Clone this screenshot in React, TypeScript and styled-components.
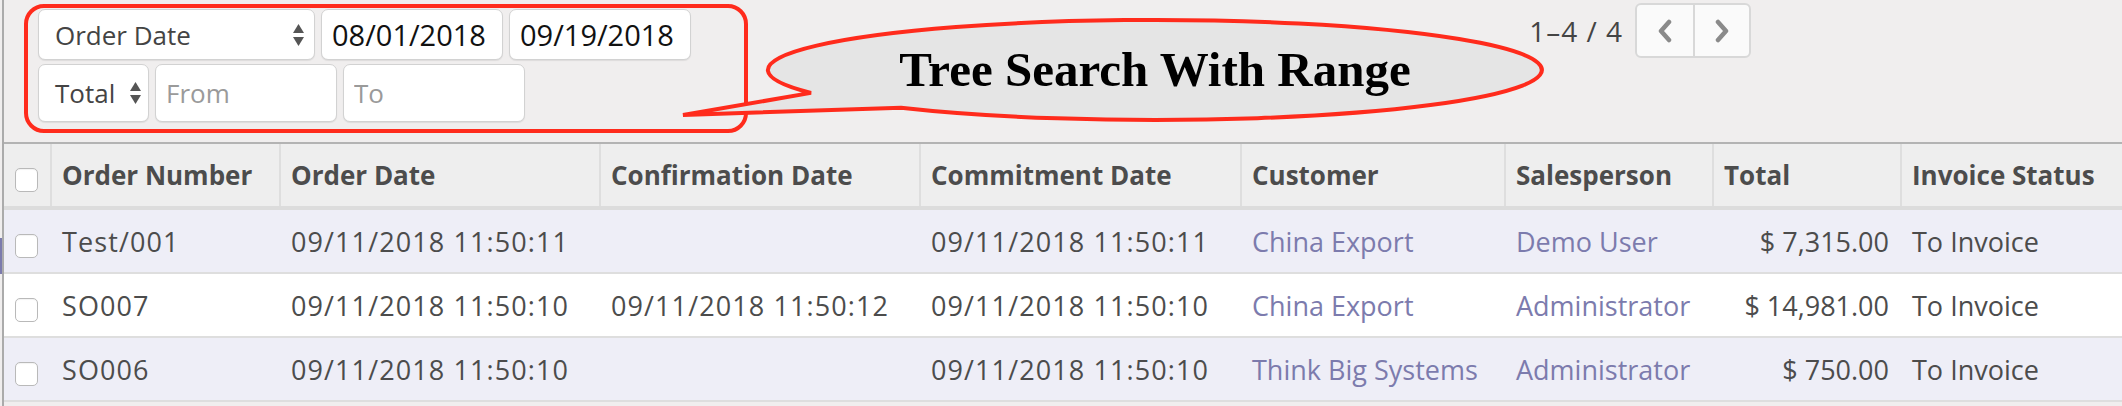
import React from "react";
import styled, { createGlobalStyle } from "styled-components";

const GlobalStyle = createGlobalStyle`
  html, body {
    margin: 0;
    padding: 0;
  }
  body {
    background: #f0eeee;
    font-family: "Open Sans", "Noto Sans", sans-serif;
    color: #4c4c4c;
  }
`;

const COLS = "46px 229px 320px 320px 321px 264px 208px 188px 222px";

type Order = {
  number: string;
  orderDate: string;
  confirmation: string;
  commitment: string;
  customer: string;
  salesperson: string;
  total: string;
  status: string;
};

const orders: Order[] = [
  {
    number: "Test/001",
    orderDate: "09/11/2018 11:50:11",
    confirmation: "",
    commitment: "09/11/2018 11:50:11",
    customer: "China Export",
    salesperson: "Demo User",
    total: "$ 7,315.00",
    status: "To Invoice",
  },
  {
    number: "SO007",
    orderDate: "09/11/2018 11:50:10",
    confirmation: "09/11/2018 11:50:12",
    commitment: "09/11/2018 11:50:10",
    customer: "China Export",
    salesperson: "Administrator",
    total: "$ 14,981.00",
    status: "To Invoice",
  },
  {
    number: "SO006",
    orderDate: "09/11/2018 11:50:10",
    confirmation: "",
    commitment: "09/11/2018 11:50:10",
    customer: "Think Big Systems",
    salesperson: "Administrator",
    total: "$ 750.00",
    status: "To Invoice",
  },
];

const headers = [
  "Order Number",
  "Order Date",
  "Confirmation Date",
  "Commitment Date",
  "Customer",
  "Salesperson",
  "Total",
  "Invoice Status",
];

const SelectArrows = () => (
  <svg width="11" height="22" viewBox="0 0 11 22">
    <polygon points="0,9 5.5,0 11,9" fill="#555" />
    <polygon points="0,13 5.5,22 11,13" fill="#555" />
  </svg>
);

const Chevron = ({ dir }: { dir: "left" | "right" }) => (
  <svg width="16" height="24" viewBox="0 0 16 24">
    <polyline
      points={dir === "left" ? "12,3 4,12 12,21" : "4,3 12,12 4,21"}
      fill="none"
      stroke="#8a8a8a"
      strokeWidth="4.5"
      strokeLinecap="round"
      strokeLinejoin="round"
    />
  </svg>
);

export default function App() {
  return (
    <Root>
      <GlobalStyle />
      <SideMark />
      <Page>
        <ControlPanel>
          <SearchFrame>
            <FieldRow $h={51}>
              <SelectBox $w={277} $pr={10}>
                <span>Order Date</span>
                <SelectArrows />
              </SelectBox>
              <Field $w={182} $size={29} defaultValue="08/01/2018" />
              <Field $w={182} $size={29} defaultValue="09/19/2018" />
            </FieldRow>
            <FieldRow $h={58}>
              <SelectBox $w={111} $pr={7}>
                <span>Total</span>
                <SelectArrows />
              </SelectBox>
              <Field $w={182} $size={26} placeholder="From" />
              <Field $w={182} $size={26} placeholder="To" />
            </FieldRow>
          </SearchFrame>
          <Pager>
            <PagerValue>1–4 / 4</PagerValue>
            <PagerButtons>
              <PagerButton>
                <Chevron dir="left" />
              </PagerButton>
              <PagerButton>
                <Chevron dir="right" />
              </PagerButton>
            </PagerButtons>
          </Pager>
        </ControlPanel>

        <Callout>
          <CalloutShape width="885" height="112" viewBox="0 0 885 112">
            <path
              d="M 141 77.9 A 387 50 0 1 1 231 92.7 L 13 100 Z"
              fill="#e5e5e5"
              stroke="#ff2b1c"
              strokeWidth="4"
              strokeLinejoin="miter"
            />
          </CalloutShape>
          <CalloutText>Tree Search With Range</CalloutText>
        </Callout>

        <HeadRow>
          <CheckCell>
            <CheckBox />
          </CheckCell>
          {headers.map((h) => (
            <HeadCell key={h}>{h}</HeadCell>
          ))}
        </HeadRow>
        {orders.map((o, i) => (
          <BodyRow key={o.number} $striped={i % 2 === 0}>
            <CheckCell>
              <CheckBox />
            </CheckCell>
            <Cell $num>{o.number}</Cell>
            <Cell $num>{o.orderDate}</Cell>
            <Cell $num>{o.confirmation}</Cell>
            <Cell $num>{o.commitment}</Cell>
            <Cell $link>{o.customer}</Cell>
            <Cell $link>{o.salesperson}</Cell>
            <Cell $right>{o.total}</Cell>
            <Cell>{o.status}</Cell>
          </BodyRow>
        ))}
      </Page>
    </Root>
  );
}

const Root = styled.div`
  position: relative;
  width: 2122px;
  height: 406px;
  overflow: hidden;
`;

const SideMark = styled.div`
  position: absolute;
  left: 0;
  top: 238px;
  width: 2px;
  height: 36px;
  background: #7c7bad;
`;

const Page = styled.div`
  position: relative;
  width: 2118px;
  height: 406px;
  margin-left: 2px;
  border-left: 2px solid #ababab;
`;

const ControlPanel = styled.div`
  display: flex;
  align-items: flex-start;
  height: 142px;
`;

const SearchFrame = styled.div`
  box-sizing: border-box;
  width: 724px;
  height: 129px;
  margin: 4px 0 0 20px;
  padding: 1px 0 0 10px;
  border: 4px solid #ff2b1c;
  border-radius: 20px;
  display: flex;
  flex-direction: column;
  gap: 4px;
`;

const FieldRow = styled.div<{ $h: number }>`
  display: flex;
  gap: 6px;
  height: ${(p) => p.$h}px;
`;

const SelectBox = styled.div<{ $w: number; $pr: number }>`
  box-sizing: border-box;
  width: ${(p) => p.$w}px;
  height: 100%;
  display: flex;
  align-items: center;
  justify-content: space-between;
  padding: 0 ${(p) => p.$pr}px 0 16px;
  background: #fff;
  border: 1px solid #d2d2d2;
  border-radius: 7px;
  box-shadow: 0 1px 1px rgba(0, 0, 0, 0.08);
  font-size: 26px;
  color: #444;
`;

const Field = styled.input<{ $w: number; $size: number }>`
  box-sizing: border-box;
  width: ${(p) => p.$w}px;
  height: 100%;
  padding: 0 0 0 10px;
  background: #fff;
  border: 1px solid #d2d2d2;
  border-radius: 7px;
  box-shadow: 0 1px 1px rgba(0, 0, 0, 0.08);
  font-family: "Open Sans", "Noto Sans", sans-serif;
  font-size: ${(p) => p.$size}px;
  color: #111;
  outline: none;

  &::placeholder {
    color: #9a9a9a;
  }
`;

const Pager = styled.div`
  display: flex;
  align-items: center;
  gap: 12px;
  margin: 3px 371px 0 auto;
`;

const PagerValue = styled.span`
  font-size: 28px;
  letter-spacing: 1px;
  color: #444;
`;

const PagerButtons = styled.div`
  box-sizing: border-box;
  display: flex;
  height: 55px;
  background: #fafafa;
  border: 2px solid #d8d8d8;
  border-radius: 6px;
  overflow: hidden;
`;

const PagerButton = styled.button`
  width: 56px;
  padding: 0;
  border: 0;
  background: transparent;
  display: flex;
  align-items: center;
  justify-content: center;

  & + & {
    border-left: 2px solid #d8d8d8;
  }
`;

const Callout = styled.div`
  position: absolute;
  left: 666px;
  top: 15px;
  width: 885px;
  height: 112px;
  box-sizing: border-box;
  padding: 0 0 4px 85px;
  display: flex;
  align-items: center;
  justify-content: center;
  z-index: 2;
`;

const CalloutShape = styled.svg`
  position: absolute;
  left: 0;
  top: 0;
  overflow: visible;
`;

const CalloutText = styled.span`
  position: relative;
  font-family: "Liberation Serif", "Times New Roman", serif;
  font-weight: 700;
  font-size: 49px;
  line-height: 1;
  color: #000;
  white-space: nowrap;
`;

const HeadRow = styled.div`
  display: grid;
  grid-template-columns: ${COLS};
  height: 62px;
  background: #eeeeee;
  border-top: 2px solid #b3b3b3;
  border-bottom: 4px solid #dcdcdc;
`;

const BodyRow = styled.div<{ $striped: boolean }>`
  display: grid;
  grid-template-columns: ${COLS};
  height: 62px;
  background: ${(p) => (p.$striped ? "#eeeef7" : "#ffffff")};
  border-bottom: 2px solid #dedede;
`;

const CheckCell = styled.div`
  display: flex;
  align-items: center;
  padding-left: 11px;
`;

const CheckBox = styled.span`
  box-sizing: border-box;
  width: 23px;
  height: 24px;
  margin-top: 10px;
  background: #fff;
  border: 1px solid #b9b9b9;
  border-radius: 5px;
  box-shadow: inset 0 1px 1px rgba(0, 0, 0, 0.05);
`;

const HeadCell = styled.div`
  display: flex;
  align-items: center;
  padding: 0 10px;
  border-left: 2px solid #dedede;
  font-size: 26px;
  font-weight: 700;
  color: #4c4c4c;
  white-space: nowrap;
  overflow: hidden;
`;

const Cell = styled.div<{ $link?: boolean; $right?: boolean; $num?: boolean }>`
  display: flex;
  align-items: center;
  justify-content: ${(p) => (p.$right ? "flex-end" : "flex-start")};
  padding: 0 ${(p) => (p.$right ? "11px" : "12px")} 0 12px;
  font-size: 27px;
  letter-spacing: ${(p) => (p.$num ? "1.1px" : "0")};
  color: ${(p) => (p.$link ? "#7c7bad" : "#4c4c4c")};
  white-space: nowrap;
  overflow: hidden;
`;
